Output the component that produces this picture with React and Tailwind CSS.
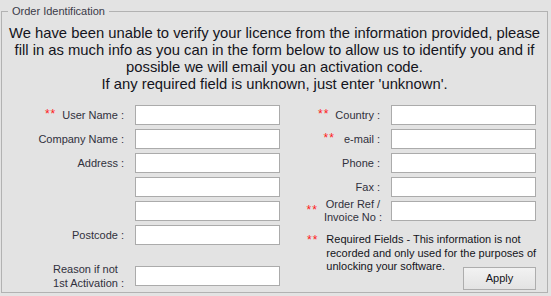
import React from "react";

const UI = { fontFamily: '"Liberation Sans", Arial, sans-serif' };

function Stars({ className = "" }) {
  return (
    <span className={`text-[12px] leading-none tracking-[1px] text-[#ff1a1a] ${className}`}>**</span>
  );
}

function Field({ w = "w-[145px]" }) {
  return <input type="text" className={`${w} h-[20px] shrink-0 border border-[#ababab] bg-white outline-none`} />;
}

function Row({ label, req, labelW, children, className = "" }) {
  return (
    <div className={`flex h-[20px] items-center gap-[11px] ${className}`}>
      <div className={`${labelW} flex shrink-0 items-center justify-end gap-[6px] whitespace-nowrap`}>
        {req && <Stars className="-mt-[3px]" />}
        {label}
      </div>
      {children || <Field />}
    </div>
  );
}

const LEFT = "w-[122px]";
const RIGHT = "w-[100px]";

export default function App() {
  return (
    <div className="h-[296px] w-[551px] overflow-hidden bg-[#e3e3e3] pt-[5px] text-[11px] text-[#30303c]" style={UI}>
      <fieldset className="ml-[1px] h-[288px] w-[547px] border border-[#b2b2b2]">
        <legend className="ml-[6px] px-[4px] text-[11px] leading-[13px] text-[#3a3a48]">Order Identification</legend>

        <p className="mt-[7px] whitespace-nowrap text-center text-[14.8px] leading-[17px] text-[#141420]">
          We have been unable to verify your licence from the information provided, please
          <br />
          fill in as much info as you can in the form below to allow us to identify you and if
          <br />
          possible we will email you an activation code.
          <br />
          If any required field is unknown, just enter 'unknown'.
        </p>

        <div className="mt-[12px] flex">
          {/* left column */}
          <div className="flex w-[278px] flex-col gap-[4px]">
            <Row labelW={LEFT} req label="User Name :" />
            <Row labelW={LEFT} label="Company Name :" />
            <Row labelW={LEFT} label="Address :" />
            <Row labelW={LEFT} label="" />
            <Row labelW={LEFT} label="" />
            <Row labelW={LEFT} label="Postcode :" />
            <Row
              labelW={LEFT}
              className="mt-[17px]"
              label={
                <span className="inline-block text-left leading-[14px]">
                  Reason if not
                  <br />
                  1st Activation :
                </span>
              }
            />
          </div>

          {/* right column */}
          <div className="flex w-[256px] flex-col gap-[4px]">
            <Row labelW={RIGHT} req label="Country :" />
            <Row labelW={RIGHT} req label={<span className="pl-[3px]">e-mail :</span>} />
            <Row labelW={RIGHT} label="Phone :" />
            <Row labelW={RIGHT} label="Fax :" />
            <Row
              labelW={RIGHT}
              req
              label={
                <span className="-mr-[2px] inline-block text-center leading-[13.5px]">
                  Order Ref /
                  <br />
                  Invoice No :
                </span>
              }
            />

            <div className="mt-[8px] flex gap-[8px] pl-[27px]">
              <Stars className="mt-[1px]" />
              <p className="whitespace-nowrap leading-[13.5px] text-[#141420]">
                Required Fields - This information is not
                <br />
                recorded and only used for the purposes of
                <br />
                unlocking your software.
              </p>
            </div>
            <button className="-mt-[11px] h-[23px] w-[73px] self-end border border-[#adadad] bg-gradient-to-b from-[#f2f2f2] to-[#e3e3e3] text-[11px] text-[#141420]">
              Apply
            </button>
          </div>
        </div>
      </fieldset>
    </div>
  );
}
